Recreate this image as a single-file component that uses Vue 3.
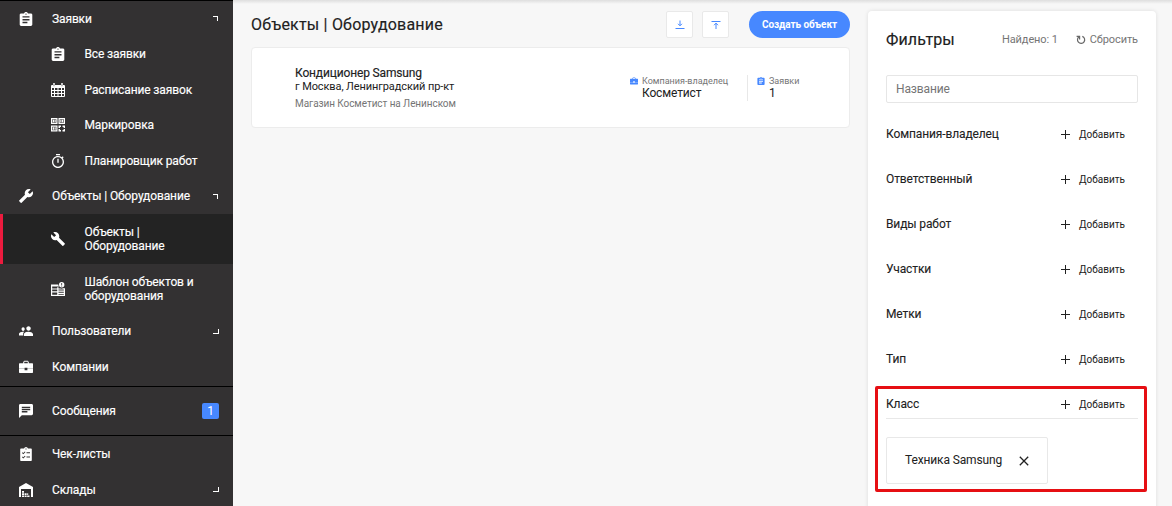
<script setup>
import { h } from 'vue'

const icons = {
  assignment: { box: '2 1 20 20', d: 'M19 3h-4.18C14.4 1.84 13.3 1 12 1c-1.3 0-2.4.84-2.82 2H5c-1.1 0-2 .9-2 2v14c0 1.1.9 2 2 2h14c1.1 0 2-.9 2-2V5c0-1.1-.9-2-2-2zm-7 0c.55 0 1 .45 1 1s-.45 1-1 1-1-.45-1-1 .45-1 1-1zm2 14H7v-2h7v2zm3-4H7v-2h10v2zm0-4H7V7h10v2z' },
  calendar: { box: '0 0 14 14', d: 'M0 3q0-1 1-1h1V1q0-1 1-1t1 1v1h6V1q0-1 1-1t1 1v1h1q1 0 1 1v10q0 1-1 1H1q-1 0-1-1zM1 5v2h2V5zm3 0v2h2.500V5zm3.500 0v2H10V5zM11 5v2h2V5zM1 8v2h2V8zm3 0v2h2.500V8zm3.500 0v2H10V8zM11 8v2h2V8zM1 11v2h2v-2zm3 0v2h2.500v-2zm3.500 0v2H10v-2zm3.500 0v2h2v-2zM2.700 1v2.200h.6V1zm8 0v2.200h.6V1z' },
  marking: { box: '0 0 14 14', d: 'M0 0h6.500v6H0zM1.200 1.200v3.600h4.100V1.200zM1.800 1.800h1.200v2.400H1.800zm1.700 0h1.200v2.400H3.500zM7.500 0H14v6H7.500zm1.200 1.200v3.600h4.100V1.200zm.6.6h1.200v2.400H9.300zm1.700 0h1.200v2.400H11zM0 7.500h6.500v6H0zm1.200 1.200v3.600h4.100V8.700zm.6.6H3v2.400H1.800zm1.700 0h1.200v2.400H3.500zM7.500 7.500H10V9H9v1H7.500zM11.500 7.500H14V10h-1.400V9h-1.100zM7.500 11H9v1.100h1v1.400H7.500zM12.600 11H14v2.500h-2.500v-1.400h1.100z' },
  timer: { box: '2 1 20 21', d: 'M15 1H9v2h6V1zm-4 13h2V8h-2v6zm8.030-6.610 1.420-1.420c-.43-.51-.9-.99-1.410-1.410l-1.420 1.420A8.962 8.962 0 0 0 12 4c-4.970 0-9 4.030-9 9s4.020 9 9 9 9-4.030 9-9c0-2.120-.74-4.070-1.970-5.610zM12 20c-3.870 0-7-3.130-7-7s3.130-7 7-7 7 3.130 7 7-3.130 7-7 7z' },
  wrench: { box: '1 1 22 22', d: 'M22.700 19l-9.100-9.100c.9-2.300.4-5-1.500-6.900-2-2-5-2.400-7.400-1.300L9 6 6 9 1.600 4.700C.4 7.100.9 10.100 2.900 12.100c1.900 1.900 4.600 2.400 6.900 1.500l9.100 9.100c.4.4 1 .4 1.400 0l2.300-2.300c.5-.4.5-1.100.1-1.400z' },
  template: { box: '0 0 14 14', d: 'M0 2.500h7.300q0 1.200.7 2H1.200v2h5V5.300h1.300v1.200h2q1.500.5 2.800-.3H14V14H0zM1.200 7.600v1.700h5V7.600zm0 2.900v2.200h5v-2.200zM7.500 7.600v1h5.300v-1zm0 2.200v1h5.300v-1zm0 2.100v.9h5.300v-.9zM10.700 0a2.700 2.700 0 1 1 0 5.400 2.700 2.700 0 0 1 0-5.400zM10.300 1v2.200h.8V1zm0 2.800v.7h.8v-.7z' },
  people: { box: '1 2 22 20', d: 'M16 11.500c1.930 0 3.490-1.570 3.490-3.500S17.930 4.500 16 4.500 12.500 6.070 12.500 8s1.570 3.500 3.500 3.500zM7.500 12C9.160 12 10 10.660 10 9S9.160 6 7.500 6 5 7.340 5 9s.84 3 2.500 3zM7 13c-2.300 0-6 1.200-6 3.500V19h6.500v-2.500c0-1.100.6-2.300 1.700-3.300L7 13zm9 0c-2.700 0-7.300 1.300-7.300 3.900V20H23v-3.100c0-2.600-4.300-3.900-7-3.900z' },
  briefcase: { box: '2 2 20 20', d: 'M10 15H2v4.500q0 1 1 1h18q1 0 1-1V15h-8v1.500h-4zM21 6.500h-5V5l-1.500-2h-5L8 5v1.500H3q-1 0-1 1V14.400h8v-1.500h4v1.500h8V7.500q0-1-1-1zm-6.500 0h-5v-2h5z' },
  chat: { box: '2 2 20 20', d: 'M20 2H4c-1.100 0-1.990.9-1.990 2L2 22l4-4h14c1.100 0 2-.9 2-2V4c0-1.100-.9-2-2-2zM6 9h12v2H6V9zm8 5H6v-2h8v2zm4-6H6V6h12v2z' },
  checklist: { box: '0 0 14 14', d: 'M2 1.500h3Q5.500 0 7 0t2 1.500h3q.8 0 .8.8v11q0 .7-.8.7H2q-.8 0-.8-.7v-11q0-.8.800-.8zM6.500 1.400v1.200h1V1.400zM3 6l1.300 1.300L6.500 5l-.7-.6-1.500 1.500-.7-.6zM7.500 5.300v1H11v-1zM3 10.300l1.300 1.300 2.200-2.300-.7-.6-1.500 1.500-.7-.6zM7.500 9.600v1H11v-1z' },
  warehouse: { box: '0 0 14 14', d: 'M0 4 7 0l7 4v10h-2V6H2v8H0zM3 8h2v1.700H3zm0 2.200h2V12H3zm2.600 0h2V12h-2zM3 12.500h2V14H3zm2.600 0h2V14h-2zm2.600 0h2.300V14H8.200zm0-2.300h1V12h-1z' },
}

const Icon = (props) =>
  h('svg', { viewBox: icons[props.name].box, fill: 'currentColor', 'aria-hidden': 'true' }, [
    h('path', { d: icons[props.name].d, 'fill-rule': 'evenodd' }),
  ])
Icon.props = ['name']

const menu = [
  { label: 'Заявки', icon: 'assignment', arrow: 'up' },
  { label: 'Все заявки', icon: 'assignment', sub: true },
  { label: 'Расписание заявок', icon: 'calendar', sub: true },
  { label: 'Маркировка', icon: 'marking', sub: true },
  { label: 'Планировщик работ', icon: 'timer', sub: true },
  { label: 'Объекты | Оборудование', icon: 'wrench', arrow: 'up', flip: true },
  { label: 'Объекты |\nОборудование', icon: 'wrench', sub: true, tall: true, active: true },
  { label: 'Шаблон объектов и\nоборудования', icon: 'template', sub: true, tall: true },
  { label: 'Пользователи', icon: 'people', arrow: 'down' },
  { label: 'Компании', icon: 'briefcase' },
  { label: 'Сообщения', icon: 'chat', badge: 1, boxed: true },
  { label: 'Чек-листы', icon: 'checklist' },
  { label: 'Склады', icon: 'warehouse', arrow: 'down' },
]

const filters = ['Компания-владелец', 'Ответственный', 'Виды работ', 'Участки', 'Метки', 'Тип', 'Класс']
</script>

<template>
  <div class="page">
    <nav class="sidebar">
      <div
        v-for="(item, i) in menu"
        :key="i"
        class="item"
        :class="{ sub: item.sub, tall: item.tall, active: item.active, boxed: item.boxed }"
      >
        <Icon :name="item.icon" class="item-icon" :class="{ flip: item.flip }" />
        <span class="label">{{ item.label }}</span>
        <span v-if="item.badge" class="badge">{{ item.badge }}</span>
        <i v-if="item.arrow" class="arrow" :class="item.arrow"></i>
      </div>
    </nav>

    <main class="main">
      <header class="head">
        <h1>Объекты | Оборудование</h1>
        <button class="square">
          <svg width="10" height="10" viewBox="0 0 10 10" fill="none" stroke="#4788ff">
            <path d="M.5 8.500h9M5 .5v5M3 3.800l2 2 2-2" />
          </svg>
        </button>
        <button class="square">
          <svg width="10" height="10" viewBox="0 0 10 10" fill="none" stroke="#4788ff">
            <path d="M.5 1.500h9M5 9V3M3 5.200l2-2 2 2" />
          </svg>
        </button>
        <button class="create">Создать объект</button>
      </header>

      <article class="card">
        <div class="about">
          <div class="name">Кондиционер Samsung</div>
          <div class="address">г Москва, Ленинградский пр-кт</div>
          <div class="place">Магазин Косметист на Ленинском</div>
        </div>
        <div class="stat owner">
          <Icon name="briefcase" class="stat-icon" />
          <div><div class="stat-label">Компания-владелец</div><div class="stat-value">Косметист</div></div>
        </div>
        <div class="stat requests">
          <Icon name="assignment" class="stat-icon" />
          <div><div class="stat-label">Заявки</div><div class="stat-value">1</div></div>
        </div>
      </article>
    </main>

    <aside class="filters">
      <div class="filters-head">
        <h2>Фильтры</h2>
        <span class="found">Найдено: 1</span>
        <svg class="reset-icon" width="10" height="10" viewBox="0 0 10 10" fill="none" stroke="#666" stroke-width="1.200">
          <path d="M.6 1.400h3v3M3.400 1.600A3.600 3.600 0 1 0 6.300 1.400" />
        </svg>
        <span class="reset">Сбросить</span>
      </div>
      <input class="search" placeholder="Название" />
      <div v-for="f in filters" :key="f" class="filter">
        <span class="filter-name">{{ f }}</span>
        <svg class="plus" width="9" height="9" viewBox="0 0 9 9" stroke="#222"><path d="M0 4.500h9M4.500 0v9" /></svg>
        <span class="add">Добавить</span>
      </div>
      <div class="chip">
        <span>Техника Samsung</span>
        <svg width="10" height="10" viewBox="0 0 10 10" stroke="#222" stroke-width="1.300"><path d="M.8.8l8.400 8.400M9.200.8.8 9.200" /></svg>
      </div>
      <div class="highlight"></div>
    </aside>
    <div class="top-shade"></div>
  </div>
</template>

<style>
body {
  margin: 0;
  overflow: hidden;
}
</style>

<style scoped>
* {
  box-sizing: border-box;
}
.page {
  position: relative;
  display: flex;
  width: 1172px;
  height: 506px;
  overflow: hidden;
  background: #f7f7f7;
  color: #212121;
  font-family: Roboto, "Noto Sans", sans-serif;
  font-size: 12px;
}
.sidebar {
  flex: none;
  width: 233px;
  border-top: 1px solid #000;
  background: #333132;
  color: #fff;
}
.item {
  display: flex;
  align-items: center;
  height: 35.500px;
  padding: 0 14px 0 19px;
  line-height: 14px;
}
.item.sub {
  padding-left: 51px;
}
.item.tall {
  height: 50px;
}
.item.active {
  background: #232323;
  box-shadow: inset 3px 0 #ec1b3e;
}
.item.tall:not(.active) {
  height: 49.500px;
}
.item.boxed {
  height: 50px;
  margin-top: 1.500px;
  border: solid #000;
  border-width: 1px 0;
}
.item.boxed ~ .item {
  padding-top: 1px;
}
.item-icon {
  flex: none;
  width: 14px;
  height: 14px;
  margin-right: 19px;
}
.flip {
  transform: scaleX(-1);
}
.label {
  flex: 1;
  white-space: pre;
  letter-spacing: -0.120px;
  -webkit-text-stroke: 0.150px currentColor;
}
.sub .label {
  position: relative;
  left: 0.500px;
}
.badge {
  width: 17px;
  height: 16px;
  border-radius: 2px;
  background: #4788ff;
  line-height: 16px;
  text-align: center;
}
.arrow {
  width: 6px;
  height: 5px;
  border-right: 1px solid #fff;
}
.arrow.up {
  margin-right: 1px;
  width: 5px;
  border-top: 1px solid #fff;
}
.arrow.down {
  border-bottom: 1px solid #fff;
}
.main {
  flex: none;
  width: 599px;
  margin-left: 18px;
}
.head {
  display: flex;
  align-items: center;
  height: 27px;
  margin-top: 11px;
}
h1,
h2 {
  margin: 0;
  font-size: 16px;
  font-weight: 400;
  -webkit-text-stroke: 0.150px currentColor;
}
h1 {
  flex: 1;
  letter-spacing: 0.200px;
}
button {
  padding: 0;
  border: 0;
  font: inherit;
}
.square {
  display: flex;
  align-items: center;
  justify-content: center;
  width: 27px;
  height: 27px;
  margin-right: 9px;
  border: 1px solid #e9e9e9;
  border-radius: 2px;
  background: #fff;
}
.create {
  width: 101px;
  height: 27px;
  margin-left: 11px;
  border-radius: 14px;
  background: #4788ff;
  color: #fff;
  font-size: 10px;
  font-weight: 700;
  letter-spacing: -0.080px;
}
.card {
  display: flex;
  height: 81px;
  margin-top: 9px;
  border: 1px solid #ececec;
  border-radius: 4px;
  background: #fff;
}
.about {
  width: 378px;
  padding: 18px 0 0 43px;
}
.name {
  letter-spacing: -0.150px;
  line-height: 14px;
  -webkit-text-stroke: 0.150px currentColor;
}
.address {
  font-size: 11px;
  letter-spacing: -0.100px;
  line-height: 13px;
}
.place {
  margin-top: 6px;
  color: #757575;
  font-size: 10px;
  letter-spacing: -0.070px;
  line-height: 10px;
}
.stat {
  display: flex;
  height: 26px;
  margin-top: 27px;
}
.owner {
  width: 118px;
  border-right: 1px solid #e8e8e8;
}
.requests {
  padding-left: 9px;
}
.stat-icon {
  width: 8px;
  height: 8px;
  margin: 2px 4px 0 0;
  color: #4788ff;
}
.stat-label {
  color: #757575;
  font-size: 9px;
  line-height: 12px;
}
.stat-value {
  letter-spacing: -0.150px;
  line-height: 12px;
}
.filters {
  position: relative;
  flex: none;
  width: 288px;
  height: 520px;
  margin: 11px 0 0 18px;
  padding: 0 18px;
  border-radius: 4px;
  background: #fff;
  box-shadow: 0 0 4px #0000001c;
}
.filters-head {
  display: flex;
  align-items: center;
  height: 57px;
  color: #757575;
  font-size: 11px;
  letter-spacing: -0.100px;
}
h2 {
  flex: 1;
  color: #212121;
  letter-spacing: 0.100px;
}
.reset-icon {
  margin: 0 4px 0 18px;
}
.search {
  display: block;
  width: 252px;
  height: 28px;
  margin: 7px 0 8px;
  padding: 0 9px;
  border: 1px solid #e6e6e6;
  border-radius: 2px;
  font: 12px Roboto, sans-serif;
  letter-spacing: -0.120px;
}
.search::placeholder {
  color: #757575;
}
.filter {
  display: flex;
  align-items: center;
  height: 45px;
}
.filter-name {
  flex: 1;
  letter-spacing: -0.120px;
  -webkit-text-stroke: 0.100px currentColor;
}
.plus {
  margin: 2px 9px 0 0;
}
.add {
  width: 59px;
  padding-top: 2px;
  font-size: 10px;
}
.chip {
  display: flex;
  align-items: center;
  justify-content: space-between;
  width: 162px;
  height: 47px;
  margin-top: 11px;
  padding: 0 18px;
  border: 1px solid #e8e8e8;
  border-radius: 2px;
  letter-spacing: -0.130px;
}
.chip span {
  margin-top: -2px;
}
.filter:has(+ .chip) {
  background: linear-gradient(#e8e8e8, #e8e8e8) 0 37px / 100% 1px no-repeat;
}
/* Callout frame drawn over the panel content */
.highlight {
  position: absolute;
  top: 375px;
  left: 7px;
  width: 272px;
  height: 106px;
  border: 3px solid #e60f13;
  border-radius: 2px;
}
.top-shade {
  position: absolute;
  top: 0;
  right: 0;
  left: 233px;
  height: 4px;
  background: linear-gradient(#dedede, #f7f7f7);
}
</style>
